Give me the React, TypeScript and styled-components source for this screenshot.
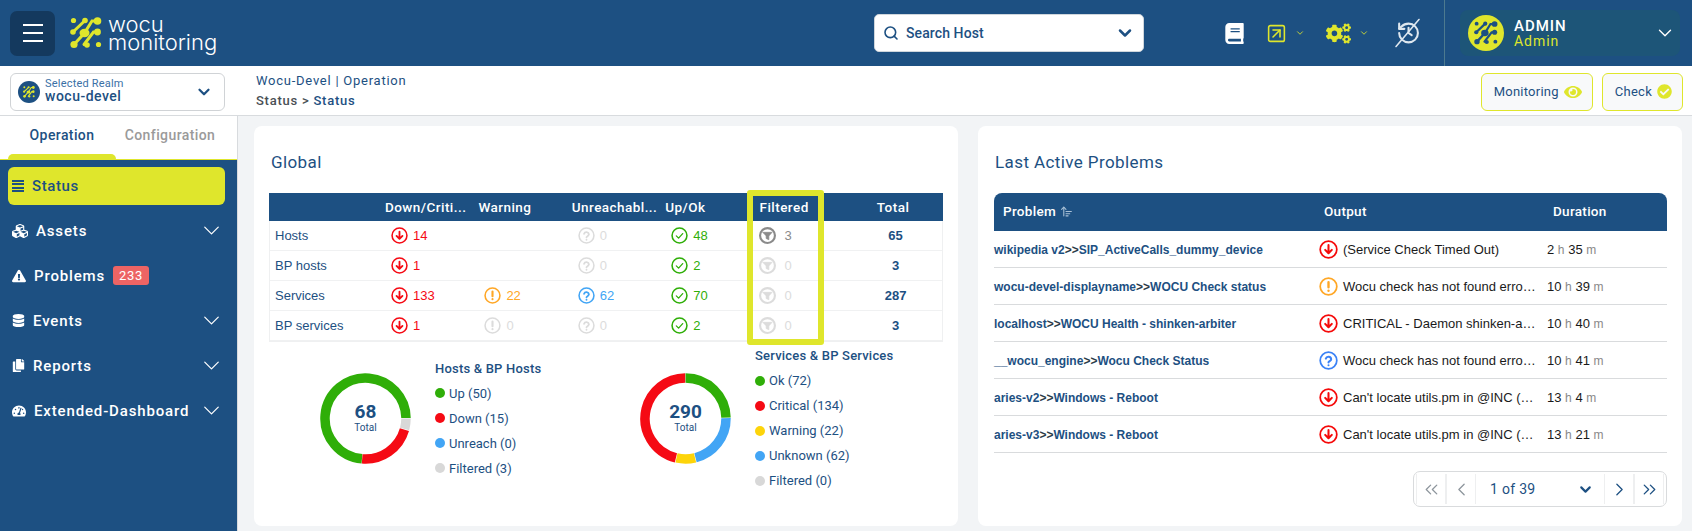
import React from "react";
import styled, { createGlobalStyle } from "styled-components";
import { ArrowUpWideNarrow, ChevronDown, ChevronLeft, ChevronRight, ChevronsLeft, ChevronsRight, Search, SquareArrowUpRight } from "lucide-react";
import { FaBook, FaCheckCircle, FaCogs, FaCopy, FaCubes, FaDatabase, FaExclamationTriangle, FaEye, FaTachometerAlt } from "react-icons/fa";

const BLUE = "#1d5082";
const YELLOW = "#dfe62c";
const RED = "#f50a14";
const GREEN = "#2fae08";
const SKY = "#42a5f5";
const ORANGE = "#ffa726";
const MUTED = "#dcdcdc";

const GlobalStyle = createGlobalStyle`
  html, body { margin: 0; padding: 0; height: 100%; overflow: hidden; }
  body { font-family: Roboto, "Liberation Sans", sans-serif; background: #f2f4f6; }
  * { box-sizing: border-box; }
`;

type Kind = "down" | "warn" | "unknown" | "ok" | "filter";

const kindColor: Record<Kind, string> = { down: RED, warn: ORANGE, unknown: SKY, ok: GREEN, filter: "#8a8a8a" };

const StatusIcon = ({ kind, size = 17, muted, color }: { kind: Kind; size?: number; muted?: boolean; color?: string }) => {
  const c = muted ? MUTED : color || kindColor[kind];
  return (
    <svg width={size} height={size} viewBox="0 0 24 24" fill="none" stroke={c} strokeWidth={kind === "filter" ? 3 : 2.2} strokeLinecap="round" strokeLinejoin="round" style={{ flex: "none" }}>
      <circle cx="12" cy="12" r="10.5" />
      {kind === "down" && <path d="M12 6.5v10M7.8 12.5l4.2 4.2 4.2-4.2" strokeWidth="2.6" />}
      {kind === "warn" && <path d="M12 6.5v6.5M12 17.2v.1" strokeWidth="3" />}
      {kind === "unknown" && <path d="M8.6 9.6a3.5 3.5 0 0 1 6.8.8c0 2.3-3.4 2.6-3.4 4.2M12 18v.1" strokeWidth="2.6" />}
      {kind === "ok" && <path d="M7.5 12.5l3.2 3.2 5.8-6.4" strokeWidth="1.8" />}
      {kind === "filter" && <path d="M5.5 7.5h13l-4.6 5.2v5.3l-3.8-1.8v-3.5z" fill={c} stroke={c} strokeWidth="1" />}
    </svg>
  );
};

const LogoMark = ({ color, size = 32 }: { color: string; size?: number }) => (
  <svg width={size} height={size} viewBox="0 0 32 32" fill="none" stroke={color} strokeWidth="3" strokeLinecap="round" style={{ flex: "none" }}>
    <g fill={color} stroke="none">
      <circle cx="3.5" cy="3.5" r="2.6" />
      <circle cx="15" cy="3.5" r="2.8" />
      <circle cx="27.5" cy="4" r="3.8" />
      <circle cx="3" cy="15" r="2.8" />
      <ellipse cx="14.5" cy="16" rx="5" ry="4.2" />
      <circle cx="27.5" cy="15" r="3.4" />
      <circle cx="4" cy="27.5" r="3.6" />
      <circle cx="17" cy="28" r="2.8" />
      <circle cx="28.5" cy="27.5" r="2.6" />
    </g>
    <path d="M15 3.5 3 15M27 4h-5l-7.5 12L4 27.5M27.5 15h-4L14 27.5" />
  </svg>
);

type DonutPart = { value: number; color: string; start: number };

const Donut = ({ parts, total }: { parts: DonutPart[]; total: number }) => {
  const r = 40.5;
  const len = 2 * Math.PI * r;
  return (
    <svg width="91" height="91" viewBox="0 0 91 91">
      <g fill="none" strokeWidth="9.5">
        {parts.map((p) => (
          <circle
            key={p.color}
            cx="45.5"
            cy="45.5"
            r={r}
            stroke={p.color}
            strokeDasharray={`${(p.value / total) * len - 0.6} ${len}`}
            transform={`rotate(${p.start - 90} 45.5 45.5)`}
          />
        ))}
      </g>
    </svg>
  );
};

const globalRows = [
  { name: "Hosts", down: 14, warn: null, unknown: 0, ok: 48, filtered: 3, total: 65 },
  { name: "BP hosts", down: 1, warn: null, unknown: 0, ok: 2, filtered: 0, total: 3 },
  { name: "Services", down: 133, warn: 22, unknown: 62, ok: 70, filtered: 0, total: 287 },
  { name: "BP services", down: 1, warn: 0, unknown: 0, ok: 2, filtered: 0, total: 3 },
];

const problems: { host: string; service: string; kind: Kind; output: string; h: number; m: number }[] = [
  { host: "wikipedia v2", service: "SIP_ActiveCalls_dummy_device", kind: "down", output: "(Service Check Timed Out)", h: 2, m: 35 },
  { host: "wocu-devel-displayname", service: "WOCU Check status", kind: "warn", output: "Wocu check has not found erro…", h: 10, m: 39 },
  { host: "localhost", service: "WOCU Health - shinken-arbiter", kind: "down", output: "CRITICAL - Daemon shinken-a…", h: 10, m: 40 },
  { host: "__wocu_engine", service: "Wocu Check Status", kind: "unknown", output: "Wocu check has not found erro…", h: 10, m: 41 },
  { host: "aries-v2", service: "Windows - Reboot", kind: "down", output: "Can't locate utils.pm in @INC (…", h: 13, m: 4 },
  { host: "aries-v3", service: "Windows - Reboot", kind: "down", output: "Can't locate utils.pm in @INC (…", h: 13, m: 21 },
];

const hostLegend = [
  { label: "Up (50)", color: GREEN },
  { label: "Down (15)", color: RED },
  { label: "Unreach (0)", color: SKY },
  { label: "Filtered (3)", color: "#d8d8d8" },
];

const serviceLegend = [
  { label: "Ok (72)", color: GREEN },
  { label: "Critical (134)", color: RED },
  { label: "Warning (22)", color: "#fdd40a" },
  { label: "Unknown (62)", color: SKY },
  { label: "Filtered (0)", color: "#d8d8d8" },
];

const hostParts = [
  { value: 50, color: GREEN, start: 185 },
  { value: 3, color: "#d8d8d8", start: 90 },
  { value: 15, color: RED, start: 106 },
];

const serviceParts = [
  { value: 72, color: GREEN, start: 0 },
  { value: 62, color: SKY, start: 89.4 },
  { value: 22, color: "#fdd40a", start: 166.4 },
  { value: 134, color: RED, start: 193.7 },
];

const Count = ({ kind, value }: { kind: Kind; value: number | null }) => {
  if (value === null) return <Cell />;
  const muted = value === 0;
  const isFilter = kind === "filter";
  return (
    <Cell $filter={isFilter}>
      <StatusIcon kind={kind} muted={muted} />
      <CountText $color={muted ? MUTED : kindColor[kind]}>{value}</CountText>
    </Cell>
  );
};

const App = () => {
  return (
    <Page>
      <GlobalStyle />
      <TopBar>
        <MenuButton>
          <MenuLine />
          <MenuLine />
          <MenuLine />
        </MenuButton>
        <Logo>
          <LogoMark color={YELLOW} />
          <LogoText>
            <div>wocu</div>
            <div>monitoring</div>
          </LogoText>
        </Logo>
        <SearchBox>
          <Search size={16} color={BLUE} strokeWidth={2.4} />
          <SearchText>Search Host</SearchText>
          <ChevronDown size={20} color={BLUE} strokeWidth={3} />
        </SearchBox>
        <TopIcons>
          <FaBook size={21} color="#fff" />
          <TopMenu>
            <SquareArrowUpRight size={21} color={YELLOW} strokeWidth={1.8} />
            <ChevronDown size={10} color={YELLOW} />
          </TopMenu>
          <TopMenu>
            <FaCogs size={25} color={YELLOW} />
            <ChevronDown size={10} color={YELLOW} />
          </TopMenu>
          <NoTimerIcon viewBox="0 0 24 28" fill="none" stroke="#dfe8ef" strokeWidth="1.5" strokeLinecap="round" strokeLinejoin="round">
            <path d="M4 14a9 9 0 1 0 9-9 9.750 9.750 0 0 0-6.740 2.740L4 10" strokeWidth="2" />
            <path d="M4 5v5h5M13 9v5l3 2" strokeWidth="2" />
            <path d="M1 27 23 1" />
          </NoTimerIcon>
        </TopIcons>
        <UserArea>
          <UserChip>
            <Avatar>
              <LogoMark color={BLUE} size={24} />
            </Avatar>
            <UserText>
              <UserName>ADMIN</UserName>
              <UserRole>Admin</UserRole>
            </UserText>
            <ChevronDown size={22} color="#fff" strokeWidth={1.5} />
          </UserChip>
        </UserArea>
      </TopBar>

      <SubBar>
        <RealmSelect>
          <RealmBadge>
            <LogoMark color={YELLOW} size={12} />
          </RealmBadge>
          <RealmText>
            <RealmLabel>Selected Realm</RealmLabel>
            <RealmName>wocu-devel</RealmName>
          </RealmText>
          <ChevronDown size={18} color={BLUE} strokeWidth={3} />
        </RealmSelect>
        <Crumbs>
          <CrumbTop>Wocu-Devel | Operation</CrumbTop>
          <CrumbBottom>
            <span>Status &gt; </span>Status
          </CrumbBottom>
        </Crumbs>
        <SubActions>
          <ActionButton>
            Monitoring <FaEye size={18} color={YELLOW} />
          </ActionButton>
          <ActionButton>
            Check <FaCheckCircle size={15} color={YELLOW} />
          </ActionButton>
        </SubActions>
      </SubBar>

      <Body>
        <Sidebar>
          <Tabs>
            <Tab $active>Operation</Tab>
            <Tab>Configuration</Tab>
          </Tabs>
          <Nav>
            <ActiveItem>
              <StatusGlyph>
                <i />
                <i />
                <i />
                <i />
              </StatusGlyph>
              Status
            </ActiveItem>
            <NavItem>
              <FaCubes size={16} />
              <span>Assets</span>
              <NavChevron />
            </NavItem>
            <NavItem>
              <FaExclamationTriangle size={14} />
              <span>Problems</span>
              <Badge>233</Badge>
            </NavItem>
            <NavItem>
              <FaDatabase size={13} />
              <span>Events</span>
              <NavChevron />
            </NavItem>
            <NavItem>
              <FaCopy size={13} />
              <span>Reports</span>
              <NavChevron />
            </NavItem>
            <NavItem>
              <FaTachometerAlt size={14} />
              <span>Extended-Dashboard</span>
              <NavChevron />
            </NavItem>
          </Nav>
        </Sidebar>

        <Main>
          <Panel>
            <PanelTitle>Global</PanelTitle>
            <GlobalTable>
              <GlobalHead>
                <span />
                <HeadCell>Down/Criti...</HeadCell>
                <HeadCell>Warning</HeadCell>
                <HeadCell>Unreachabl...</HeadCell>
                <HeadCell>Up/Ok</HeadCell>
                <HeadCell $indent>Filtered</HeadCell>
                <TotalHead>Total</TotalHead>
              </GlobalHead>
              {globalRows.map((r) => (
                <GlobalRow key={r.name}>
                  <RowName>{r.name}</RowName>
                  <Count kind="down" value={r.down} />
                  <Count kind="warn" value={r.warn} />
                  <Count kind="unknown" value={r.unknown} />
                  <Count kind="ok" value={r.ok} />
                  <Count kind="filter" value={r.filtered} />
                  <TotalCell>{r.total}</TotalCell>
                </GlobalRow>
              ))}
              <Highlight />
            </GlobalTable>
            <Charts>
              <ChartGroup $indent={51}>
                <DonutBox>
                  <Donut parts={hostParts} total={68} />
                  <DonutCenter>
                    <DonutValue>68</DonutValue>
                    <DonutLabel>Total</DonutLabel>
                  </DonutCenter>
                </DonutBox>
                <Legend>
                  <LegendTitle>Hosts &amp; BP Hosts</LegendTitle>
                  {hostLegend.map((l) => (
                    <LegendItem key={l.label}>
                      <Dot $color={l.color} />
                      {l.label}
                    </LegendItem>
                  ))}
                </Legend>
              </ChartGroup>
              <ChartGroup $indent={0}>
                <DonutBox>
                  <Donut parts={serviceParts} total={290} />
                  <DonutCenter>
                    <DonutValue>290</DonutValue>
                    <DonutLabel>Total</DonutLabel>
                  </DonutCenter>
                </DonutBox>
                <Legend>
                  <LegendTitle>Services &amp; BP Services</LegendTitle>
                  {serviceLegend.map((l) => (
                    <LegendItem key={l.label}>
                      <Dot $color={l.color} />
                      {l.label}
                    </LegendItem>
                  ))}
                </Legend>
              </ChartGroup>
            </Charts>
          </Panel>

          <Panel>
            <PanelTitle>Last Active Problems</PanelTitle>
            <ProblemHead>
              <ProblemHeadCell $pad={9}>
                Problem <ArrowUpWideNarrow size={13} color="#a9c0d6" />
              </ProblemHeadCell>
              <ProblemHeadCell $pad={11}>Output</ProblemHeadCell>
              <ProblemHeadCell $pad={12}>Duration</ProblemHeadCell>
            </ProblemHead>
            {problems.map((p) => (
              <ProblemRow key={p.host}>
                <ProblemName>
                  {p.host}
                  <Sep>&gt;&gt;</Sep>
                  {p.service}
                </ProblemName>
                <OutputCell>
                  <StatusIcon kind={p.kind} size={19} color={p.kind === "unknown" ? "#3b82f6" : p.kind === "down" ? "#f50a0a" : undefined} />
                  <OutputText>{p.output}</OutputText>
                </OutputCell>
                <Duration>
                  {p.h} <small>h</small> {p.m} <small>m</small>
                </Duration>
              </ProblemRow>
            ))}
            <Pager>
              <PagerButton $muted>
                <ChevronsLeft size={21} strokeWidth={1.5} />
              </PagerButton>
              <PagerButton $muted>
                <ChevronLeft size={21} strokeWidth={1.5} />
              </PagerButton>
              <PagerSelect>
                1 of 39
                <ChevronDown size={17} strokeWidth={3} />
              </PagerSelect>
              <PagerButton>
                <ChevronRight size={21} strokeWidth={1.5} />
              </PagerButton>
              <PagerButton>
                <ChevronsRight size={21} strokeWidth={1.5} />
              </PagerButton>
            </Pager>
          </Panel>
        </Main>
      </Body>
    </Page>
  );
};

export default App;

const Page = styled.div`
  width: 100vw;
  height: 100vh;
  display: flex;
  flex-direction: column;
  overflow: hidden;
`;

const TopBar = styled.header`
  height: 66px;
  flex: none;
  background: ${BLUE};
  display: flex;
  align-items: center;
  padding-left: 10px;
`;

const MenuButton = styled.div`
  width: 45px;
  height: 45px;
  border-radius: 7px;
  background: #14395e;
  display: flex;
  flex-direction: column;
  align-items: center;
  justify-content: center;
  gap: 6px;
`;

const MenuLine = styled.div`
  width: 20px;
  height: 2px;
  background: #fff;
`;

const Logo = styled.div`
  display: flex;
  align-items: center;
  gap: 6px;
  margin-left: 15px;
  width: 300px;
`;

const LogoText = styled.div`
  font-family: Inter, sans-serif;
  font-size: 22px;
  font-weight: 300;
  color: #fff;

  div {
    height: 18px;
    line-height: 18px;
  }
`;

const SearchBox = styled.div`
  width: 270px;
  height: 38px;
  margin-left: 504px;
  background: #fff;
  border: 1px solid #cfd6dc;
  border-radius: 5px;
  display: flex;
  align-items: center;
  padding: 0 8px 0 8px;
`;

const SearchText = styled.span`
  flex: 1;
  margin-left: 7px;
  font-size: 14px;
  font-weight: 500;
  letter-spacing: 0.1px;
  color: ${BLUE};
`;

const TopIcons = styled.div`
  display: flex;
  align-items: center;
  margin-left: 80px;
  gap: 21px;
`;

const TopMenu = styled.div`
  display: flex;
  align-items: center;
  gap: 8px;
`;

const NoTimerIcon = styled.svg`
  width: 25px;
  height: 30px;
  margin-left: 5px;
`;

const UserArea = styled.div`
  margin-left: 24px;
  height: 66px;
  flex: 1;
  border-left: 1px solid #4d7a8f;
  display: flex;
  align-items: center;
  padding: 0 12px 0 15px;
`;

const UserChip = styled.div`
  flex: 1;
  height: 46px;
  background: #1d5578;
  border-radius: 8px;
  display: flex;
  align-items: center;
  padding: 0 4px 0 8px;
`;

const Avatar = styled.div`
  width: 36px;
  height: 36px;
  border-radius: 50%;
  background: ${YELLOW};
  display: flex;
  align-items: center;
  justify-content: center;
`;

const UserText = styled.div`
  flex: 1;
  margin-left: 10px;
  letter-spacing: 0.95px;
`;

const UserName = styled.div`
  font-size: 15px;
  line-height: 16px;
  font-weight: 500;
  color: #fff;
`;

const UserRole = styled.div`
  font-size: 14px;
  line-height: 15px;
  color: ${YELLOW};
`;

const SubBar = styled.div`
  height: 50px;
  flex: none;
  background: #fff;
  border-bottom: 1px solid #d8dbde;
  display: flex;
  align-items: center;
  padding: 2px 9px 0 10px;
`;

const RealmSelect = styled.div`
  width: 215px;
  height: 38px;
  border: 1px solid #d0d3d6;
  border-radius: 6px;
  display: flex;
  align-items: center;
  padding: 0 11px 0 7px;
`;

const RealmBadge = styled.div`
  width: 22px;
  height: 22px;
  border-radius: 50%;
  background: ${BLUE};
  display: flex;
  align-items: center;
  justify-content: center;
`;

const RealmText = styled.div`
  flex: 1;
  margin-left: 5px;
  margin-bottom: 3px;
`;

const RealmLabel = styled.div`
  font-size: 11px;
  line-height: 12px;
  letter-spacing: 0.2px;
  color: #3a70a6;
`;

const RealmName = styled.div`
  font-size: 14px;
  line-height: 13px;
  font-weight: 500;
  letter-spacing: 0.5px;
  color: ${BLUE};
`;

const Crumbs = styled.div`
  margin-left: 31px;
  flex: 1;
  margin-bottom: 1px;
  letter-spacing: 0.75px;
`;

const CrumbTop = styled.div`
  font-size: 13px;
  line-height: 20px;
  color: ${BLUE};
`;

const CrumbBottom = styled.div`
  font-size: 13px;
  line-height: 20px;
  font-weight: 500;
  color: ${BLUE};

  span {
    color: #4a4f55;
  }
`;

const SubActions = styled.div`
  display: flex;
  gap: 9px;
`;

const ActionButton = styled.div`
  height: 38px;
  padding: 0 10px 0 12px;
  border: 1px solid ${YELLOW};
  border-radius: 6px;
  background: #f8f9fa;
  display: flex;
  align-items: center;
  gap: 5px;
  font-size: 13px;
  letter-spacing: 0.25px;
  color: ${BLUE};
`;

const Body = styled.div`
  flex: 1;
  min-height: 0;
  display: flex;
`;

const Sidebar = styled.aside`
  width: 238px;
  flex: none;
  display: flex;
  flex-direction: column;
  background: #fff;
  border-right: 1px solid #d8dbde;
`;

const Tabs = styled.div`
  height: 44px;
  flex: none;
  display: flex;
  padding-left: 8px;
  border-bottom: 1px solid ${YELLOW};
`;

const Tab = styled.div<{ $active?: boolean }>`
  width: 108px;
  text-align: center;
  padding-top: 11px;
  font-size: 14px;
  font-weight: 500;
  letter-spacing: 0.4px;
  position: relative;
  white-space: nowrap;
  color: ${(p) => (p.$active ? BLUE : "#9a9a9a")};

  &::after {
    content: "";
    display: ${(p) => (p.$active ? "block" : "none")};
    position: absolute;
    left: 0;
    right: 0;
    bottom: 0;
    height: 5px;
    border-radius: 6px 6px 0 0;
    background: ${YELLOW};
  }
`;

const Nav = styled.nav`
  flex: 1;
  background: ${BLUE};
  padding: 7px 12px 0 8px;
  display: flex;
  flex-direction: column;
`;

const ActiveItem = styled.div`
  height: 38px;
  border-radius: 6px;
  background: ${YELLOW};
  display: flex;
  align-items: center;
  gap: 8px;
  padding-left: 4px;
  font-size: 15px;
  font-weight: 500;
  letter-spacing: 0.6px;
  color: ${BLUE};
  margin-bottom: 3px;
`;

const StatusGlyph = styled.div`
  width: 12px;
  display: flex;
  flex-direction: column;
  gap: 1.5px;

  i {
    display: block;
    height: 2px;
    background: ${BLUE};
  }
`;

const NavItem = styled.div`
  height: 45px;
  display: flex;
  align-items: center;
  gap: 8px;
  padding-left: 4px;
  color: #fff;
  font-size: 15px;
  font-weight: 500;
  letter-spacing: 0.85px;
`;

const NavChevron = styled(ChevronDown).attrs({ size: 27, strokeWidth: 1.1 })`
  margin-left: auto;
  color: #fff;
`;

const Badge = styled.span`
  background: #ed6464;
  border-radius: 3px;
  padding: 2px 6px;
  font-size: 13px;
  font-weight: 400;
  letter-spacing: 0.6px;
`;

const Main = styled.main`
  flex: 1;
  min-width: 0;
  display: flex;
  gap: 20px;
  padding: 10px 10px 5px 16px;
  background: #f2f4f6;
`;

const Panel = styled.section`
  flex: 1;
  min-width: 0;
  background: #fff;
  border-radius: 8px;
  padding: 0 15px;
`;

const PanelTitle = styled.h2`
  margin: 0;
  height: 67px;
  padding: 25px 1px 0 2px;
  font-size: 17px;
  line-height: 22px;
  font-weight: 400;
  letter-spacing: 0.4px;
  color: ${BLUE};
`;

const GlobalTable = styled.div`
  position: relative;
  border: 1px solid #eff0f1;
  border-top: none;
`;

const columns = "110px 93.4px 93.4px 93.4px 93.4px 93px 95px";

const GlobalHead = styled.div`
  height: 28px;
  margin: 0 -1px;
  background: ${BLUE};
  display: grid;
  grid-template-columns: ${columns};
  align-items: center;
`;

const HeadCell = styled.span<{ $indent?: boolean }>`
  padding-left: ${(p) => (p.$indent ? 7 : 6)}px;
  font-size: 13.5px;
  font-weight: 500;
  letter-spacing: 0.45px;
  color: #fff;
  white-space: nowrap;
`;

const TotalHead = styled(HeadCell)`
  padding-left: 0;
  text-align: center;
`;

const GlobalRow = styled.div`
  height: 30px;
  display: grid;
  grid-template-columns: ${columns};
  align-items: center;
  border-bottom: 1px solid #f0f1f2;

  &:last-of-type {
    border-bottom: none;
  }
`;

const RowName = styled.span`
  padding-left: 5px;
  font-family: "Liberation Sans", sans-serif;
  font-size: 13px;
  color: ${BLUE};
`;

const Cell = styled.div<{ $filter?: boolean }>`
  display: flex;
  align-items: center;
  gap: ${(p) => (p.$filter ? 9 : 5)}px;
  padding-left: ${(p) => (p.$filter ? 5 : 11)}px;
`;

const CountText = styled.span<{ $color: string }>`
  font-family: "Liberation Sans", sans-serif;
  font-size: 13px;
  color: ${(p) => p.$color};
`;

const TotalCell = styled.span`
  text-align: center;
  font-family: "Liberation Sans", sans-serif;
  font-size: 13px;
  font-weight: 700;
  padding-left: 3px;
  color: ${BLUE};
`;

const Highlight = styled.div`
  position: absolute;
  left: 477px;
  top: -3px;
  width: 77px;
  height: 155px;
  border: 6px solid ${YELLOW};
  border-radius: 3px;
  pointer-events: none;
`;

const Charts = styled.div`
  display: grid;
  grid-template-columns: 371px 1fr;
  height: 152px;
`;

const ChartGroup = styled.div<{ $indent: number }>`
  display: flex;
  align-items: center;
  gap: 25px;
  padding-left: ${(p) => p.$indent}px;
`;

const DonutBox = styled.div`
  position: relative;
  width: 91px;
  height: 91px;
  flex: none;
`;

const DonutCenter = styled.div`
  position: absolute;
  inset: 0;
  display: flex;
  flex-direction: column;
  align-items: center;
  justify-content: center;
  color: ${BLUE};
`;

const DonutValue = styled.div`
  font-size: 19px;
  line-height: 20px;
  font-weight: 700;
`;

const DonutLabel = styled.div`
  font-size: 10px;
  line-height: 12px;
`;

const Legend = styled.div`
  display: flex;
  flex-direction: column;
  margin-left: -1px;
`;

const LegendTitle = styled.div`
  height: 25px;
  line-height: 25px;
  font-size: 13px;
  font-weight: 500;
  letter-spacing: 0.2px;
  color: ${BLUE};
`;

const LegendItem = styled.div`
  height: 25px;
  display: flex;
  align-items: center;
  gap: 4px;
  font-size: 13px;
  color: ${BLUE};
`;

const Dot = styled.span<{ $color: string }>`
  width: 10px;
  height: 10px;
  border-radius: 50%;
  background: ${(p) => p.$color};
`;

const problemColumns = "319px 228px 1fr";

const ProblemHead = styled.div`
  height: 38px;
  padding-bottom: 2px;
  border-radius: 8px 8px 0 0;
  background: ${BLUE};
  display: grid;
  grid-template-columns: ${problemColumns};
  align-items: center;
  margin-left: 1px;
`;

const ProblemHeadCell = styled.div<{ $pad: number }>`
  display: flex;
  align-items: center;
  gap: 4px;
  padding-left: ${(p) => p.$pad}px;
  font-size: 13.5px;
  font-weight: 500;
  letter-spacing: 0.3px;
  color: #fff;
`;

const ProblemRow = styled.div`
  height: 37px;
  padding-top: 1px;
  display: grid;
  grid-template-columns: ${problemColumns};
  align-items: center;
  border-bottom: 1px solid #d9dbdd;
  margin-left: 1px;
  font-family: "Liberation Sans", sans-serif;
`;

const ProblemName = styled.div`
  font-size: 12px;
  font-weight: 700;
  color: ${BLUE};
  white-space: nowrap;
`;

const Sep = styled.span`
  color: #2b3a46;
`;

const OutputCell = styled.div`
  display: flex;
  align-items: center;
  gap: 5px;
  padding-left: 6px;
  min-width: 0;
`;

const OutputText = styled.span`
  font-size: 13px;
  color: #1a1a1a;
  white-space: nowrap;
`;

const Duration = styled.div`
  padding-left: 6px;
  font-size: 13px;
  color: #1a1a1a;

  small {
    font-size: 12px;
    color: #888;
  }
`;

const Pager = styled.div`
  display: flex;
  width: 254px;
  height: 36px;
  margin: 18px 0 0 auto;
  border: 1px solid #d9dbdd;
  border-radius: 7px;
  padding: 2px;
`;

const PagerButton = styled.div<{ $muted?: boolean }>`
  width: 30px;
  display: flex;
  align-items: center;
  justify-content: center;
  border-left: 1px solid #eeeff0;
  border-right: 1px solid #eeeff0;
  color: ${(p) => (p.$muted ? "#8d959c" : BLUE)};
`;

const PagerSelect = styled.div`
  flex: 1;
  display: flex;
  align-items: center;
  justify-content: space-between;
  padding: 0 10px 0 14px;
  font-size: 14px;
  letter-spacing: 0.3px;
  color: ${BLUE};
`;
